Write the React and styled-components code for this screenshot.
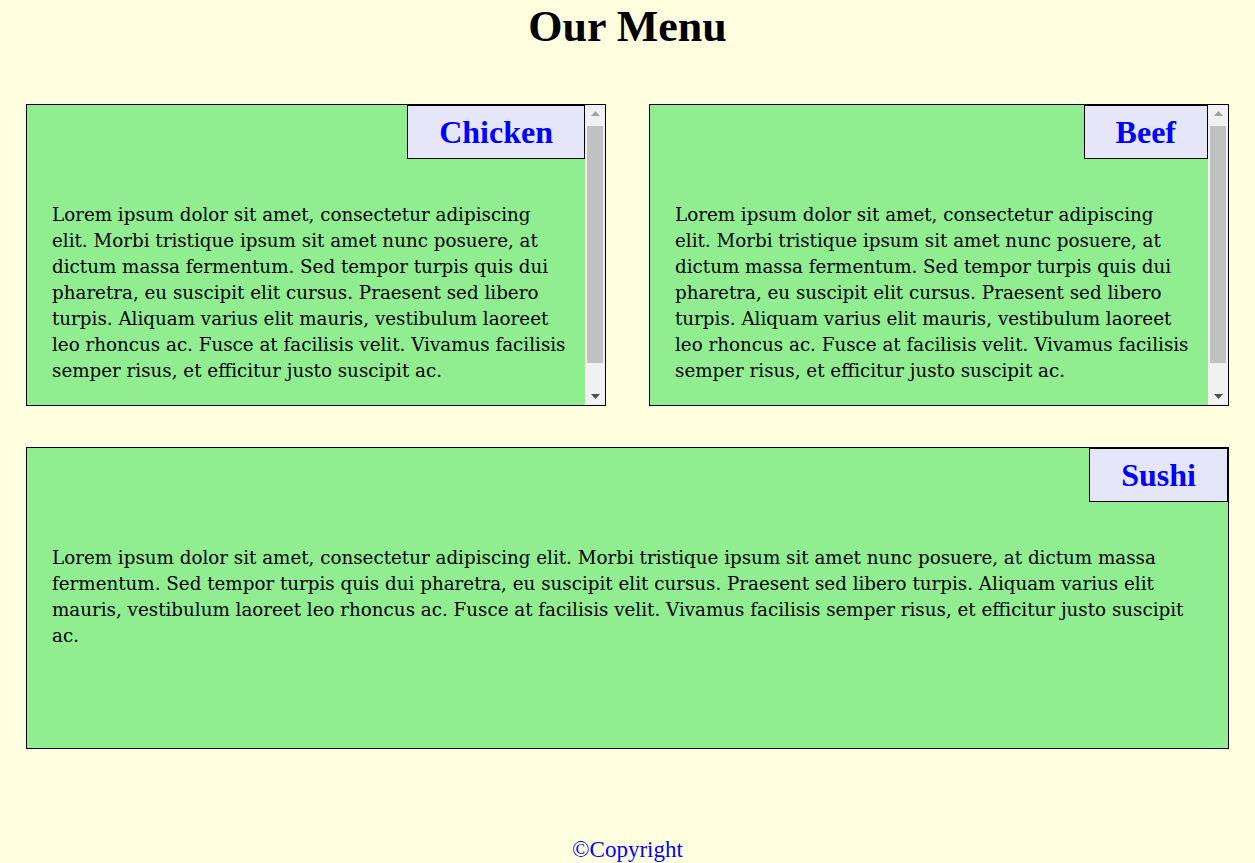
import React from "react";
import styled, { createGlobalStyle } from "styled-components";

const GlobalStyle = createGlobalStyle`
  body {
    margin: 0;
    background: #ffffe0;
    font-family: "Liberation Serif", "Times New Roman", serif;
    color: #000000;
  }
`;

const lorem =
  "Lorem ipsum dolor sit amet, consectetur adipiscing elit. Morbi tristique ipsum sit amet nunc posuere, at dictum massa fermentum. Sed tempor turpis quis dui pharetra, eu suscipit elit cursus. Praesent sed libero turpis. Aliquam varius elit mauris, vestibulum laoreet leo rhoncus ac. Fusce at facilisis velit. Vivamus facilisis semper risus, et efficitur justo suscipit ac.";

const Title = styled.h1`
  margin: 0;
  text-align: center;
  font-size: 44px;
  line-height: 54px;
  font-weight: bold;
`;

const MenuGrid = styled.main`
  display: grid;
  grid-template-columns: 1fr 1fr;
  column-gap: 43px;
  row-gap: 41px;
  padding: 0 26px;
  margin-top: 50px;
`;

const Card = styled.section`
  grid-column: ${(p) => (p.$wide ? "1 / span 2" : "auto")};
  display: flex;
  height: 300px;
  background: #90ee90;
  border: 1px solid #000000;
`;

const Content = styled.div`
  flex: 1;
  min-width: 0;
  overflow: hidden;
`;

const CardHead = styled.div`
  display: flex;
  justify-content: flex-end;
`;

const Label = styled.h2`
  margin: 0;
  padding: 0 31px;
  background: #e6e6fa;
  border: 1px solid #000000;
  color: #0000ff;
  font-size: 32px;
  line-height: 52px;
  font-weight: bold;
`;

const Text = styled.p`
  margin: 43px 16px 0 25px;
  font-family: "DejaVu Serif", serif;
  font-size: 18.3px;
  line-height: 26px;
`;

const Scrollbar = styled.div`
  display: flex;
  flex-direction: column;
  width: 20px;
  background: #f1f1f1;
`;

const ArrowButton = styled.div`
  display: flex;
  align-items: center;
  justify-content: center;
  height: 17px;
  flex: none;
`;

const Track = styled.div`
  flex: 1;
  padding: 4px 2px 0;
`;

const Thumb = styled.div`
  height: 237px;
  background: #c1c1c1;
`;

const Footer = styled.footer`
  margin-top: 88px;
  text-align: center;
  color: #0000ff;
  font-size: 23px;
  line-height: 26px;
`;

const FakeScrollbar = () => (
  <Scrollbar>
    <ArrowButton>
      <svg width="9" height="5" viewBox="0 0 9 5">
        <polygon points="0,5 9,5 4.5,0" fill="#a3a3a3" />
      </svg>
    </ArrowButton>
    <Track>
      <Thumb />
    </Track>
    <ArrowButton>
      <svg width="9" height="5" viewBox="0 0 9 5">
        <polygon points="0,0 9,0 4.5,5" fill="#505050" />
      </svg>
    </ArrowButton>
  </Scrollbar>
);

const MenuCard = ({ name, wide, scroll }) => (
  <Card $wide={wide}>
    <Content>
      <CardHead>
        <Label>{name}</Label>
      </CardHead>
      <Text>{lorem}</Text>
    </Content>
    {scroll && <FakeScrollbar />}
  </Card>
);

const App = () => {
  return (
    <>
      <GlobalStyle />
      <Title>Our Menu</Title>
      <MenuGrid>
        <MenuCard name="Chicken" scroll />
        <MenuCard name="Beef" scroll />
        <MenuCard name="Sushi" wide />
      </MenuGrid>
      <Footer>©Copyright</Footer>
    </>
  );
};

export default App;
